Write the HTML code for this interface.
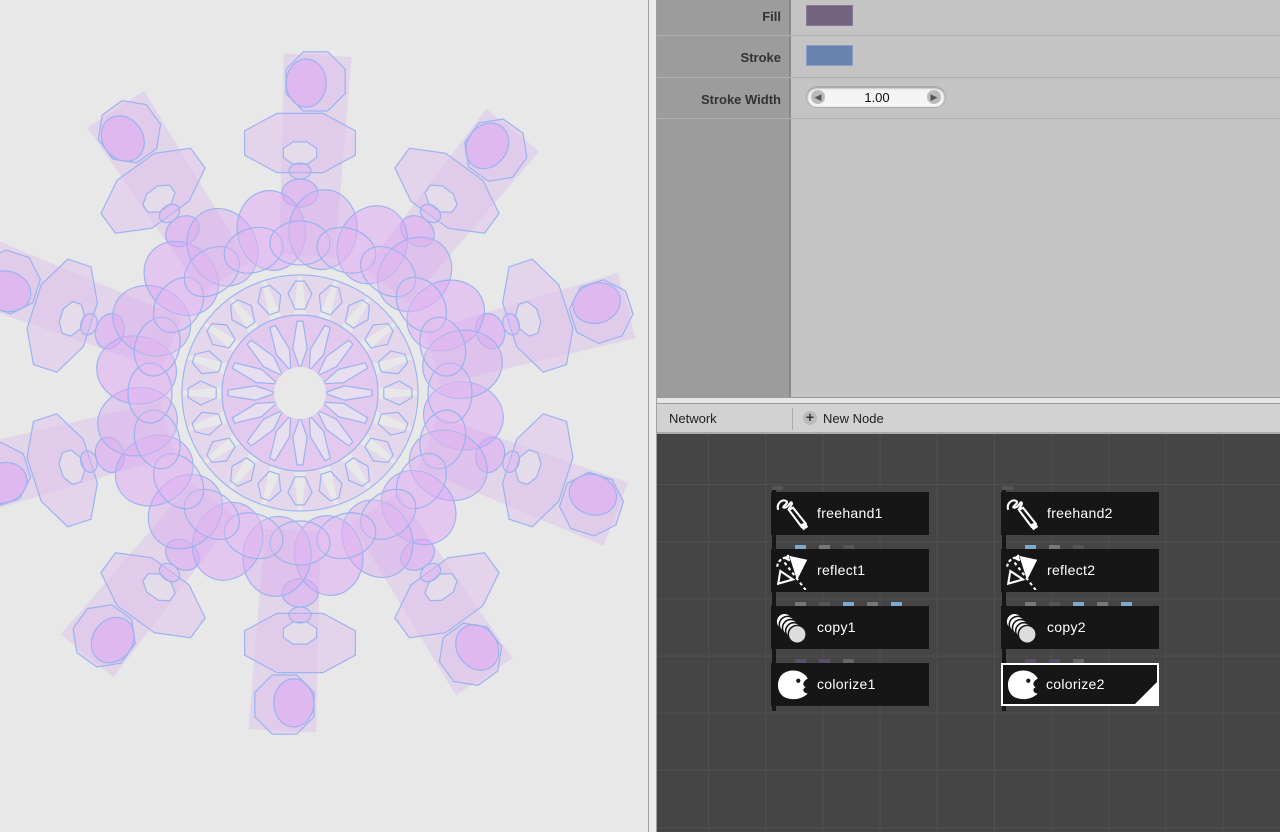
<!DOCTYPE html>
<html><head><meta charset="utf-8">
<style>
*{margin:0;padding:0;box-sizing:border-box}
body{width:1280px;height:832px;overflow:hidden;background:#e8e8e8;font-family:"Liberation Sans",sans-serif;position:relative}
#left{position:absolute;left:0;top:0;width:648px;height:832px;background:#e8e8e8;overflow:hidden}
.vline{position:absolute;top:0;height:832px;width:1px;background:#a0a0a0}
#gap{position:absolute;left:649px;top:0;width:7px;height:832px;background:#ececec}
#props{position:absolute;left:657px;top:0;width:623px;height:397px;background:#c4c4c4}
#labels{position:absolute;left:0;top:0;width:134px;height:397px;background:#9c9c9c;border-right:2px solid #8a8a8a}
.row{position:absolute;left:0;width:623px;height:41px;border-bottom:1px solid #b0b0b0}
.row .l{position:absolute;left:0;width:124px;text-align:right;font-size:13px;font-weight:bold;color:#333;top:13px}
.sw{position:absolute;left:149px;top:5px;width:47px;height:21px}
#sep{position:absolute;left:657px;top:397px;width:623px;height:7px;background:#e6e6e6;border-top:1px solid #999;border-bottom:1px solid #999}
#nethdr{position:absolute;left:657px;top:404px;width:623px;height:30px;background:#d2d2d2;border-bottom:2px solid #aaa;font-size:13px;color:#222}
#net{position:absolute;left:657px;top:434px;width:623px;height:398px;background:#454545;
background-image:linear-gradient(to right,#505050 1px,transparent 1px),linear-gradient(to bottom,#505050 1px,transparent 1px);
background-size:57.2px 57.2px;background-position:51px 50px}
.node{position:absolute;width:158px;height:43px;background:#161616;color:#fff;font-size:14px}
.node span{position:absolute;left:46px;top:13px;letter-spacing:0.3px}
.node svg{position:absolute;left:3px;top:3px}
.port{position:absolute;height:4px;width:11px}
.conn{position:absolute;width:4px;background:#161616}
</style></head><body>
<div id="left"><svg id="flower" width="648" height="832"></svg></div>
<div class="vline" style="left:648px"></div>
<div id="gap"></div>
<div class="vline" style="left:656px"></div>
<div id="props">
 <div id="labels"></div>
 <div class="row" style="top:-5px"><div class="l" style="top:14px">Fill</div><div class="sw" style="top:10px;background:#74637f;border:1px solid #8a7896"></div></div>
 <div class="row" style="top:37px"><div class="l" style="top:13px">Stroke</div><div class="sw" style="top:8px;background:#6a83ae;border:1px solid #86a0cc"></div></div>
 <div class="row" style="top:78px"><div class="l" style="top:14px">Stroke Width</div>
  <div style="position:absolute;left:149px;top:8px;width:140px;height:22px;border-radius:11px;background:#f4f4f4;box-shadow:inset 0 1px 2px #888;border:1px solid #aaa">
   <div style="position:absolute;left:4px;top:3px;width:14px;height:14px;border-radius:7px;background:#bbb;color:#555;font-size:9px;text-align:center;line-height:14px">◀</div>
   <div style="position:absolute;left:0;width:140px;top:3px;text-align:center;font-size:13px;color:#111">1.00</div>
   <div style="position:absolute;right:4px;top:3px;width:14px;height:14px;border-radius:7px;background:#bbb;color:#555;font-size:9px;text-align:center;line-height:14px">▶</div>
  </div></div>
</div>
<div id="sep"></div>
<div id="nethdr">
 <div style="position:absolute;left:12px;top:7px">Network</div>
 <div style="position:absolute;left:135px;top:4px;width:1px;height:22px;background:#aaa"></div>
 <div style="position:absolute;left:146px;top:7px;width:14px;height:14px;border-radius:7px;background:#bbb;color:#333;font-size:14px;line-height:13px;text-align:center;font-weight:bold">+</div>
 <div style="position:absolute;left:166px;top:7px">New Node</div>
</div>
<div id="net"></div>
<div id="nodes"></div>
<script>
var N=document.getElementById('nodes');var h='';
var icons={
fh:'<svg width="38" height="38" viewBox="0 0 36 36" fill="none" stroke="#fff" stroke-width="2"><path d="M4 14 C2 8 8 3 12 6 C14 8 6 12 10 12 C14 12 16 4 17 8 C17 10 14 12 14 14"/><path d="M14 14 L26 30 L30 27 L18 12 Z" fill="#161616"/><path d="M25 28 L28 32 L31 30 L29 26" fill="#fff"/></svg>',
rf:'<svg width="38" height="38" viewBox="0 0 36 36" fill="none" stroke="#fff" stroke-width="2"><path d="M3 14 A10 10 0 0 1 14 5" stroke-dasharray="3 2"/><path d="M14 3 L11 6 L15 8" fill="#fff"/><path d="M16 5 L30 8 L22 24 Z" fill="#fff"/><path d="M4 30 L6 18 L18 26 Z"/><path d="M10 10 L30 36" stroke-dasharray="3 3"/></svg>',
cp:'<svg width="38" height="38" viewBox="0 0 36 36" stroke="#161616" stroke-width="1.5"><circle cx="10" cy="12" r="8" fill="#fff"/><circle cx="13" cy="15" r="8" fill="#fff"/><circle cx="16" cy="18" r="8" fill="#fff"/><circle cx="19" cy="21" r="8" fill="#fff"/><circle cx="22" cy="24" r="8.5" fill="#ddd"/></svg>',
cz:'<svg width="38" height="38" viewBox="0 0 36 36"><path d="M32 12 C28 4 16 2 9 7 C2 12 2 24 9 29 C16 33 26 32 32 26 C28 26 26 22 30 20 C26 18 28 14 32 12 Z" fill="#fff"/><circle cx="23" cy="14" r="2" fill="#161616"/></svg>'};
var cols=[[771,'1'],[1001,'2']];
cols.forEach(function(c,ci){var x=c[0];
 var rows=[[492,'freehand',icons.fh],[549,'reflect',icons.rf],[606,'copy',icons.cp],[663,'colorize',icons.cz]];
 h+='<div class="conn" style="left:'+(x+1)+'px;top:487px;height:224px"></div>';
 h+='<div class="port" style="left:'+(x+1)+'px;top:486px;background:#555"></div>';
 rows.forEach(function(r,ri){
  var sel=(ci==1&&ri==3);
  h+='<div class="node" style="left:'+x+'px;top:'+r[0]+'px;'+(sel?'border:2px solid #fff;':'')+'">'+r[2].replace('<svg','<svg style="left:'+(sel?1:3)+'px;top:'+(sel?1:3)+'px"')+'<span style="'+(sel?'left:43px;top:11px':'')+'">'+r[1]+c[1]+'</span>'+(sel?'<div style="position:absolute;right:0;bottom:0;width:0;height:0;border-left:22px solid transparent;border-bottom:22px solid #fff"></div>':'')+'</div>';
 });
 var pc=[[ '#7ea9c8','#777','#555'],['#777','#555','#7ea9c8','#777','#7ea9c8'],['#5a4f6a','#5a4f6a','#666']];
 [545,602,659].forEach(function(y,i){pc[i].forEach(function(col,j){h+='<div class="port" style="left:'+(x+24+j*24)+'px;top:'+y+'px;background:'+col+'"></div>';});});
});
N.innerHTML=h;

var S=document.getElementById('flower');var cx=300,cy=393;var out='';
function pt(r,a){return [cx+r*Math.cos(a),cy+r*Math.sin(a)];}
function poly(pts,fill,stroke){return '<polygon points="'+pts.map(function(p){return p[0].toFixed(1)+','+p[1].toFixed(1)}).join(' ')+'" fill="'+fill+'" stroke="'+(stroke||'none')+'" stroke-width="1.2"/>';}
function blob(x,y,rx,ry,rot,fill,stroke){return '<ellipse cx="'+x.toFixed(1)+'" cy="'+y.toFixed(1)+'" rx="'+rx+'" ry="'+ry+'" transform="rotate('+rot+' '+x.toFixed(1)+' '+y.toFixed(1)+')" fill="'+fill+'" stroke="'+stroke+'" stroke-width="1.2"/>';}
var ST='#9bb3ef',F1='rgba(218,175,238,0.5)',F2='rgba(222,165,245,0.5)',F3='rgba(222,195,236,0.55)';
for(var k=0;k<10;k++){var a=(-90+k*36+3)*Math.PI/180;
 out+=poly([pt(140,a-0.2),pt(340,a-0.1),pt(340,a+0.1),pt(140,a+0.2)],'rgba(215,170,235,0.3)');}
for(var k=0;k<10;k++){var a=(-90+k*36)*Math.PI/180;var deg=-90+k*36;
 var c=Math.cos(a),s=Math.sin(a);
 function oc(r,rx,ry,off,fill){var p=pt(r,a+off);var o=[];for(var i=0;i<8;i++){var t=i*Math.PI/4+Math.PI/8;o.push([Math.cos(t)*rx,Math.sin(t)*ry]);}
  return poly(o.map(function(q){return [p[0]+q[0]*c-q[1]*s,p[1]+q[0]*s+q[1]*c]}),fill,ST);}
 out+=oc(250,32,60,0,F3);
 out+=oc(240,12,18,0,'rgba(232,232,232,0.6)');
 out+=oc(312,32,32,0.05,F3);
 var p2=pt(310,a+0.02);out+=blob(p2[0],p2[1],24,20,deg,F2,ST);
 var p4=pt(222,a);out+=blob(p4[0],p4[1],8,11,deg,'rgba(220,180,240,0.4)',ST);
 var p5=pt(200,a);out+=blob(p5[0],p5[1],14,18,deg,F2,ST);
}
for(var k=0;k<20;k++){var a=(k*18+8)*Math.PI/180;var p=pt(165,a);out+=blob(p[0],p[1],40,34,k*18+8,k%2?F1:F2,ST);}
for(var k=0;k<20;k++){var a=(k*18)*Math.PI/180;var p=pt(150,a);out+=blob(p[0],p[1],30,22,k*18+90,'rgba(226,190,240,0.35)',ST);}
out+='<circle cx="'+cx+'" cy="'+cy+'" r="118" fill="rgba(232,232,232,0.85)" stroke="'+ST+'" stroke-width="1.2"/>';
for(var k=0;k<20;k++){var a=(k*18+9)*Math.PI/180;out+=poly([pt(78,a-0.08),pt(118,a-0.14),pt(118,a+0.14),pt(78,a+0.08)],'rgba(222,180,240,0.35)');}
for(var k=0;k<20;k++){var a=(k*18)*Math.PI/180;out+=poly([pt(84,a-0.06),pt(100,a-0.12),pt(112,a-0.04),pt(112,a+0.04),pt(100,a+0.12),pt(84,a+0.06)],'none',ST);}
out+='<circle cx="'+cx+'" cy="'+cy+'" r="78" fill="rgba(222,175,240,0.55)" stroke="'+ST+'" stroke-width="1.2"/>';
for(var k=0;k<16;k++){var a=(k*22.5)*Math.PI/180;out+=poly([pt(24,a),pt(45,a-0.16),pt(72,a-0.04),pt(72,a+0.04),pt(45,a+0.16)],'rgba(232,226,238,0.85)',ST);}
out+='<circle cx="'+cx+'" cy="'+cy+'" r="26" fill="#e8e8e8"/>';
S.innerHTML=out;
</script>
</body></html>
